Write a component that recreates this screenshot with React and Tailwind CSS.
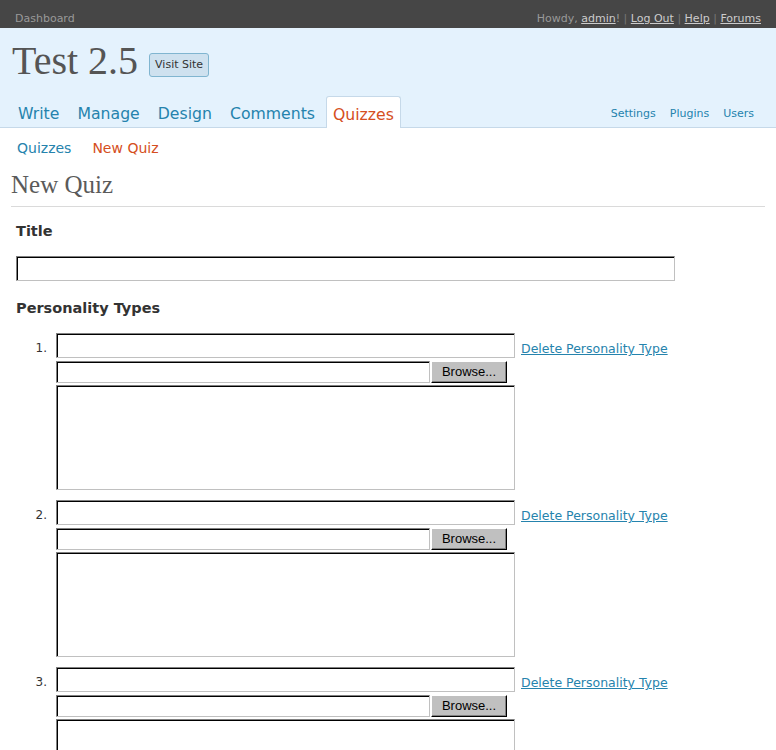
import { useState } from 'react';

const box = 'border border-t-[#808080] border-l-[#808080] border-b-[#c0c0c0] border-r-[#c0c0c0] shadow-[inset_1px_1px_0_#000] bg-white outline-none';

const tabs = ['Write', 'Manage', 'Design', 'Comments', 'Quizzes'];

const PersonalityType = ({ n }) => (
  <div className="flex mb-[10px]">
    <div className="w-[40px] pr-[9px] pt-[3px] text-right text-[12px] leading-[25px] text-[#333]">{n}.</div>
    <div className="flex flex-col">
      <input type="text" className={`${box} w-[459px] h-[25px]`} />
      <div className="flex mt-[3px]">
        <input type="text" className={`${box} w-[374px] h-[22px]`} />
        <button className="ml-[1px] w-[76px] h-[22px] bg-[#c0c0c0] border border-t-white border-l-white border-b-black border-r-black shadow-[inset_-1px_-1px_0_#808080] text-[13px] text-black font-['Liberation_Sans',Arial,sans-serif]">Browse...</button>
      </div>
      <textarea className={`${box} mt-[2px] w-[459px] h-[105px] resize-none`} />
    </div>
    <a href="#" className="ml-[6px] pt-[8px] text-[12.5px] leading-[15px] text-[#2583ad] underline h-fit">Delete Personality Type</a>
  </div>
);

export default function App() {
  const [title, setTitle] = useState('');
  return (
    <div className="min-h-[750px] bg-white font-['DejaVu_Sans',Verdana,sans-serif]">
      <div className="h-[28px] bg-[#464646] flex justify-between items-end px-[15px] pb-[2px] text-[11px] leading-[14px]">
        <span className="text-[#999]">Dashboard</span>
        <span className="text-[#999]">
          Howdy, <a href="#" className="text-[#ccc] underline">admin</a>! <span className="text-[#777]">|</span>{' '}
          <a href="#" className="text-[#ccc] underline">Log Out</a> <span className="text-[#777]">|</span>{' '}
          <a href="#" className="text-[#ccc] underline">Help</a> <span className="text-[#777]">|</span>{' '}
          <a href="#" className="text-[#ccc] underline">Forums</a>
        </span>
      </div>

      <div className="bg-[#e4f2fd] border-b border-[#c6d9e9]">
        <div className="h-[68px] flex items-center px-[12px]">
          <h1 className="font-['Liberation_Serif',Georgia,serif] text-[40px] leading-[42px] text-[#555] pb-[2px]">Test 2.5</h1>
          <a href="#" className="ml-[11px] mt-[6px] px-[5px] h-[24px] flex items-center bg-[#cee1ef] border border-[#80b5d0] rounded-[3px] text-[11px] text-[#333]">Visit Site</a>
        </div>
        <div className="h-[31px] flex justify-between items-end">
          <ul className="flex ml-[11px] gap-[4px]">
            {tabs.map((t) => (
              <li key={t}>
                {t === 'Quizzes' ? (
                  <a href="#" className="-mb-px h-[32px] px-[6px] pt-[4px] flex items-center bg-white border border-b-0 border-[#c6d9e9] rounded-t-[3px] text-[15.7px] text-[#d54e21]">{t}</a>
                ) : (
                  <a href="#" className="h-[31px] px-[7px] pt-[5px] flex items-center text-[15.7px] text-[#2583ad]">{t}</a>
                )}
              </li>
            ))}
          </ul>
          <ul className="flex gap-[14px] pr-[22px] h-[31px] items-center pt-[5px] text-[11px] text-[#2583ad]">
            <li><a href="#">Settings</a></li>
            <li><a href="#">Plugins</a></li>
            <li><a href="#">Users</a></li>
          </ul>
        </div>
      </div>

      <div className="flex gap-[21px] px-[17px] pt-[11px] text-[14px] leading-[18px]">
        <a href="#" className="text-[#2583ad]">Quizzes</a>
        <a href="#" className="text-[#d54e21]">New Quiz</a>
      </div>

      <h2 className="mx-[11px] mt-[13px] pb-[6px] border-b border-[#dadada] font-['Liberation_Serif',Georgia,serif] text-[25px] leading-[30px] text-[#5a5a5a]">New Quiz</h2>

      <form className="px-[16px]" onSubmit={(e) => e.preventDefault()}>
        <h3 className="mt-[14px] text-[14.5px] leading-[20px] font-bold text-[#333]">Title</h3>
        <input type="text" value={title} onChange={(e) => setTitle(e.target.value)} className={`${box} mt-[15px] w-[659px] h-[25px] block`} />

        <h3 className="mt-[17px] text-[14.5px] leading-[20px] font-bold text-[#333]">Personality Types</h3>
        <div className="mt-[15px]">
          {[1, 2, 3].map((n) => <PersonalityType key={n} n={n} />)}
        </div>
      </form>
    </div>
  );
}
